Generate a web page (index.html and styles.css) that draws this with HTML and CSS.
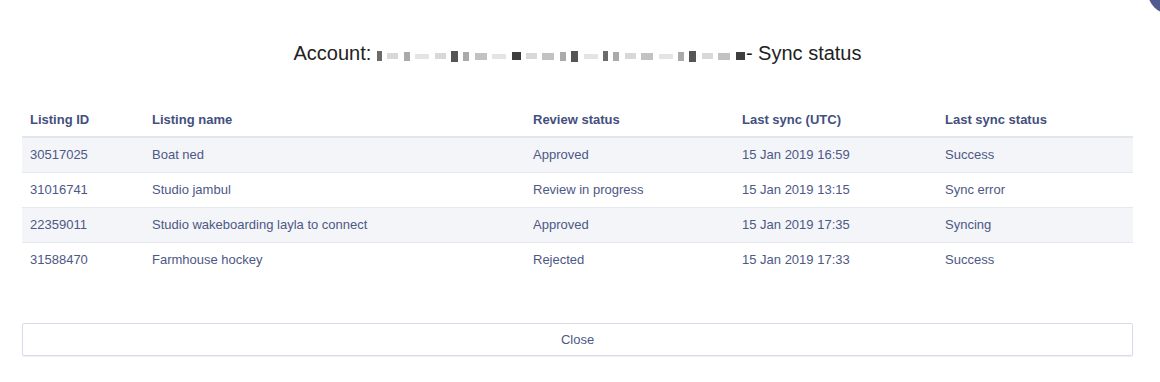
FILE: index.html
```html
<!DOCTYPE html>
<html>
<head>
<meta charset="utf-8">
<link rel="stylesheet" href="styles.css">
</head>
<body>
<div class="modal">
  <span class="corner-btn"></span>
  <h1 class="title">Account: <span class="redacted"><i class="b1"></i><i class="b2"></i><i class="b3"></i><i class="b4"></i><i class="b2"></i><i class="b5"></i><i class="b3"></i><i class="b6"></i><i class="b4"></i><i class="b7"></i><i class="b2"></i><i class="b6"></i><i class="b3"></i><i class="b5"></i><i class="b4"></i><i class="b1"></i><i class="b3"></i><i class="b2"></i><i class="b6"></i><i class="b4"></i><i class="b3"></i><i class="b5"></i><i class="b2"></i><i class="b6"></i><i class="b7"></i></span>- Sync status</h1>
  <table class="grid">
    <thead>
      <tr>
        <th class="c1">Listing ID</th>
        <th class="c2">Listing name</th>
        <th class="c3">Review status</th>
        <th class="c4">Last sync (UTC)</th>
        <th class="c5">Last sync status</th>
      </tr>
    </thead>
    <tbody>
      <tr><td>30517025</td><td>Boat ned</td><td>Approved</td><td>15 Jan 2019 16:59</td><td>Success</td></tr>
      <tr><td>31016741</td><td>Studio jambul</td><td>Review in progress</td><td>15 Jan 2019 13:15</td><td>Sync error</td></tr>
      <tr><td>22359011</td><td>Studio wakeboarding layla to connect</td><td>Approved</td><td>15 Jan 2019 17:35</td><td>Syncing</td></tr>
      <tr><td>31588470</td><td>Farmhouse hockey</td><td>Rejected</td><td>15 Jan 2019 17:33</td><td>Success</td></tr>
    </tbody>
  </table>
  <button class="close-btn">Close</button>
</div>
</body>
</html>
```
FILE: styles.css
```css
* { box-sizing: border-box; }
html, body { margin: 0; padding: 0; background: #fff; }
body { font-family: "Liberation Sans", Arial, sans-serif; color: #4a5583; }
.modal { position: relative; width: 1160px; height: 382px; padding: 40px 27px 0 22px; overflow: hidden; }
.corner-btn { position: absolute; left: 1148px; top: -30px; width: 44px; height: 44px; border-radius: 50%; background: #4f5b8f; }
.title { margin: 0; font-weight: normal; font-size: 20px; line-height: 26px; color: #222; text-align: center; }
.redacted { display: inline-flex; align-items: center; justify-content: space-between; width: 368px; height: 14px; vertical-align: -1px; margin-right: 1px; }
.redacted i { display: block; height: 9px; background: #c8c8c8; }
.redacted .b1 { width: 5px; background: #6a6a6a; height: 10px; }
.redacted .b2 { width: 11px; background: #d8d8d8; height: 6px; }
.redacted .b3 { width: 6px; background: #aaa; }
.redacted .b4 { width: 14px; background: #e4e4e4; height: 5px; }
.redacted .b5 { width: 7px; background: #555; height: 11px; }
.redacted .b6 { width: 12px; background: #c2c2c2; height: 7px; }
.redacted .b7 { width: 9px; background: #3e3e3e; height: 8px; }
.grid { width: 1111px; margin-top: 37px; border-collapse: collapse; font-size: 13px; }
.grid th { text-align: left; font-weight: bold; color: #434f7e; padding: 0 8px; height: 34px; vertical-align: middle; border-bottom: 2px solid #e3e6ee; }
.grid td { padding: 0 8px; height: 35px; border-bottom: 1px solid #e6e8ef; color: #4d5885; }
.grid tbody tr:nth-child(odd) td { background: #f4f5f8; }
.grid tbody tr:last-child td { border-bottom: none; }
.c1 { width: 122px; }
.c2 { width: 381px; }
.c3 { width: 209px; }
.c4 { width: 203px; }
.c5 { width: 196px; }
.close-btn { display: block; width: 1111px; height: 33px; margin-top: 46px; background: #fff; border: 1px solid #d9dce8; border-radius: 2px; font-family: "Liberation Sans", Arial, sans-serif; font-size: 13px; color: #4d5885; box-shadow: 0 1px 1px rgba(60,70,120,0.08); }
```
